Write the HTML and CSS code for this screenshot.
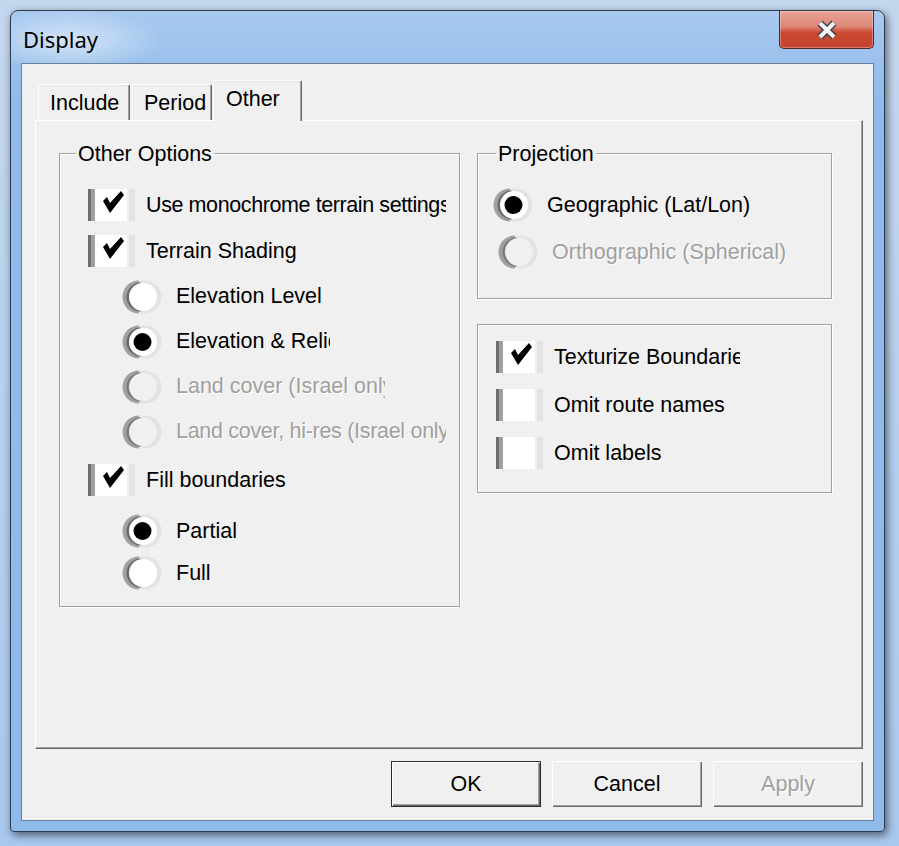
FILE: index.html
```html
<!DOCTYPE html>
<html lang="en">
<head>
  <meta charset="UTF-8" />
  <title>Display</title>
  <link rel="stylesheet" href="styles.css">
</head>
<body>
  <svg class="defs" xmlns="http://www.w3.org/2000/svg">
    <symbol id="radio-off" viewBox="0 0 42 34">
      <circle cx="25" cy="17" r="16.5" fill="#e3e3e3" />
      <path d="M19 0.5 A16.5 16.5 0 0 0 19 33.5 Z" fill="#a0a0a0" />
      <path d="M21 2.5 A14.5 14.5 0 0 0 21 31.5 Z" fill="#696969" />
      <circle cx="23" cy="17" r="14" fill="#fff" />
    </symbol>
    <symbol id="radio-on" viewBox="0 0 42 34">
      <use href="#radio-off" width="42" height="34" />
      <circle cx="22.5" cy="17" r="9" fill="#000" />
    </symbol>
    <symbol id="radio-dis" viewBox="0 0 42 34">
      <circle cx="25" cy="17" r="16.5" fill="#e3e3e3" />
      <path d="M19 0.5 A16.5 16.5 0 0 0 19 33.5 Z" fill="#a0a0a0" />
      <path d="M21 2.5 A14.5 14.5 0 0 0 21 31.5 Z" fill="#7a7a7a" />
      <circle cx="23" cy="17" r="14" fill="#f0f0f0" />
    </symbol>
    <symbol id="check" viewBox="0 0 47 32">
      <polygon points="15,12 19,8 22,14 33,2 36,6 22,24" fill="#000" />
    </symbol>
  </svg>

  <div class="window">
    <div class="titlebar">
      <span class="title">Display</span>
      <div class="close">
        <svg width="24" height="20" viewBox="0 0 24 20">
          <path d="M5 3 L19 17 M19 3 L5 17" stroke="#394150" stroke-width="7" />
          <path d="M5 3 L19 17 M19 3 L5 17" stroke="#f4f4f4" stroke-width="4" />
        </svg>
      </div>
    </div>

    <div class="client">
      <div class="tabs">
        <div class="tab tab-include">Include</div>
        <div class="tab tab-period">Period</div>
        <div class="tab tab-other active">Other</div>
      </div>

      <div class="panel">
        <div class="group group-other">
          <span class="group-title">Other Options</span>
          <div class="row cb-row">
            <span class="checkbox"><svg><use href="#check" /></svg></span>
            <span class="label w-300">Use monochrome terrain settings</span>
          </div>
          <div class="row cb-row">
            <span class="checkbox"><svg><use href="#check" /></svg></span>
            <span class="label">Terrain Shading</span>
          </div>
          <div class="row radio-row sub">
            <svg class="radio"><use href="#radio-off" /></svg>
            <span class="label">Elevation Level</span>
          </div>
          <div class="row radio-row sub">
            <svg class="radio"><use href="#radio-on" /></svg>
            <span class="label w-154">Elevation &amp; Relie</span>
          </div>
          <div class="row radio-row sub disabled">
            <svg class="radio"><use href="#radio-dis" /></svg>
            <span class="label w-209">Land cover (Israel only</span>
          </div>
          <div class="row radio-row sub disabled">
            <svg class="radio"><use href="#radio-dis" /></svg>
            <span class="label w-270">Land cover, hi-res (Israel only</span>
          </div>
          <div class="row cb-row fill-row">
            <span class="checkbox"><svg><use href="#check" /></svg></span>
            <span class="label">Fill boundaries</span>
          </div>
          <div class="row radio-row sub tight first">
            <svg class="radio"><use href="#radio-on" /></svg>
            <span class="label">Partial</span>
          </div>
          <div class="row radio-row sub tight">
            <svg class="radio"><use href="#radio-off" /></svg>
            <span class="label">Full</span>
          </div>
        </div>

        <div class="col-right">
          <div class="group group-proj">
            <span class="group-title">Projection</span>
            <div class="row radio-row proj-1">
              <svg class="radio"><use href="#radio-on" /></svg>
              <span class="label">Geographic (Lat/Lon)</span>
            </div>
            <div class="row radio-row proj-2 disabled">
              <svg class="radio"><use href="#radio-dis" /></svg>
              <span class="label">Orthographic (Spherical)</span>
            </div>
          </div>

          <div class="group group-flags">
            <div class="row flag-row">
              <span class="checkbox"><svg><use href="#check" /></svg></span>
              <span class="label w-186">Texturize Boundarie</span>
            </div>
            <div class="row flag-row">
              <span class="checkbox"></span>
              <span class="label">Omit route names</span>
            </div>
            <div class="row flag-row">
              <span class="checkbox"></span>
              <span class="label">Omit labels</span>
            </div>
          </div>
        </div>
      </div>

      <div class="buttons">
        <button class="btn btn-default">OK</button>
        <button class="btn">Cancel</button>
        <button class="btn" disabled>Apply</button>
      </div>
    </div>
  </div>
</body>
</html>
```

FILE: styles.css
```css
body {
  margin: 0;
  width: 899px;
  height: 846px;
  overflow: hidden;
  background: linear-gradient(#c4d7ee, #a9c8ee);
  font-family: "Liberation Sans", Arial, sans-serif;
  color: #000;
}
.defs {
  position: absolute;
  width: 0;
  height: 0;
}
.window {
  margin: 10px 0 0 10px;
  width: 875px;
  height: 822px;
  box-sizing: border-box;
  border: 1px solid #2d3a4c;
  border-radius: 8px 8px 4px 4px;
  background: linear-gradient(#a9c9ef, #8ebbeb 90px, #8ebbeb);
  box-shadow: 2px 3px 8px rgba(0, 0, 0, 0.55);
  padding: 0 10px 10px;
  display: flex;
  flex-direction: column;
}
.titlebar {
  height: 52px;
  margin: 0 -10px;
  padding: 0 10px 0 12px;
  display: flex;
  justify-content: space-between;
  align-items: flex-start;
  background: radial-gradient(ellipse 95px 32px at 58px 30px, rgba(255, 255, 255, 0.55), rgba(255, 255, 255, 0));
}
.title {
  font-family: "Segoe UI", "Noto Sans", sans-serif;
  font-size: 22px;
  line-height: 30px;
  margin-top: 13px;
}
.close {
  width: 95px;
  height: 38px;
  box-sizing: border-box;
  border: 1px solid #56281f;
  border-top: none;
  border-radius: 0 0 5px 5px;
  background: linear-gradient(#eaa397, #de8776 42%, #cb4a32 58%, #c6432d);
  box-shadow: inset 0 0 0 1px rgba(255, 255, 255, 0.3);
  display: flex;
  align-items: center;
  justify-content: center;
}

/* client area */
.client {
  flex: 1;
  background: #f0f0f0;
  border: 1px solid #6b7f98;
  padding: 16px 0 0 13px;
  display: flex;
  flex-direction: column;
}
.tabs {
  display: flex;
  align-items: flex-end;
  height: 40px;
  padding-left: 3px;
  position: relative;
  z-index: 1;
}
.tab {
  height: 36px;
  box-sizing: border-box;
  padding-left: 11px;
  font-size: 21.5px;
  line-height: 36px;
  background: #f0f0f0;
  border-top: 1px solid #fff;
  border-left: 1px solid #fff;
  border-right: 1px solid #696969;
  border-radius: 2px 2px 0 0;
  box-shadow: inset -1px 0 #a0a0a0, inset 0 1px #e3e3e3;
}
.tab-include {
  width: 92px;
}
.tab-period {
  width: 80px;
  margin-left: 2px;
}
.tab-other {
  width: 89px;
  margin-left: 1px;
}
.tab.active {
  height: 41px;
  margin-bottom: -1px;
  padding-left: 12px;
  line-height: 36px;
}
.panel {
  width: 828px;
  height: 629px;
  box-sizing: border-box;
  border-top: 1px solid #fff;
  border-left: 1px solid #fff;
  border-right: 1px solid #696969;
  border-bottom: 1px solid #696969;
  box-shadow: inset -1px -1px #a0a0a0;
  display: flex;
  gap: 17px;
  padding: 32px 0 0 23px;
}

/* group boxes */
.group {
  position: relative;
  box-sizing: border-box;
  border: 1px solid #a0a0a0;
  box-shadow: inset 1px 1px #fff, 1px 1px #fff;
}
.group-title {
  position: absolute;
  top: -12px;
  left: 16px;
  padding: 0 2px;
  background: #f0f0f0;
  font-size: 21.5px;
  line-height: 24px;
}
.group-other {
  width: 401px;
  height: 454px;
  padding: 28px 0 0 28px;
}
.col-right {
  display: flex;
  flex-direction: column;
  gap: 25px;
}
.group-proj {
  width: 355px;
  height: 146px;
  padding: 28px 0 0 13px;
}
.group-proj .group-title {
  left: 18px;
}
.group-flags {
  width: 355px;
  height: 169px;
  padding: 8px 0 0 18px;
}

/* rows */
.row {
  display: flex;
  align-items: center;
  font-size: 21.5px;
  white-space: nowrap;
}
.label {
  overflow: hidden;
}
.w-300 { width: 300px; letter-spacing: -0.4px; }
.w-154 { width: 154px; }
.w-209 { width: 209px; }
.w-270 { width: 270px; letter-spacing: -0.3px; }
.w-186 { width: 186px; }
.cb-row {
  height: 46px;
  gap: 11px;
}
.fill-row {
  margin-top: 3px;
}
.radio-row {
  height: 45px;
  gap: 14px;
}
.sub {
  padding-left: 32px;
}
.sub.tight {
  height: 42px;
}
.sub.tight.first {
  margin-top: 7px;
}
.proj-1 {
  height: 46px;
}
.proj-2 {
  height: 48px;
  padding-left: 5px;
}
.flag-row {
  height: 48px;
  gap: 11px;
}
.disabled {
  color: #a0a0a0;
}
.disabled .label {
  text-shadow: 1px 1px #fff;
}
.radio {
  width: 42px;
  height: 34px;
  flex: none;
}
.checkbox {
  width: 47px;
  height: 32px;
  flex: none;
  background: linear-gradient(to right, #6d6d6d 0 3px, #a0a0a0 3px 7px, #fff 7px 39px, #f0f0f0 39px 41px, #e3e3e3 41px 47px);
}
.checkbox svg {
  display: block;
  width: 47px;
  height: 32px;
}

/* buttons */
.buttons {
  width: 828px;
  margin-top: 12px;
  display: flex;
  justify-content: flex-end;
  gap: 11px;
}
.btn {
  width: 150px;
  height: 46px;
  box-sizing: border-box;
  padding: 0;
  border: none;
  background: #f0f0f0;
  font-family: "Liberation Sans", Arial, sans-serif;
  font-size: 21.5px;
  color: #000;
  box-shadow: inset 1px 1px #fff, inset -1px -1px #696969, inset -2px -2px #a0a0a0;
}
.btn-default {
  border: 1px solid #2a2a2a;
}
.btn:disabled {
  color: #a0a0a0;
  text-shadow: 1px 1px #fff;
}
```
